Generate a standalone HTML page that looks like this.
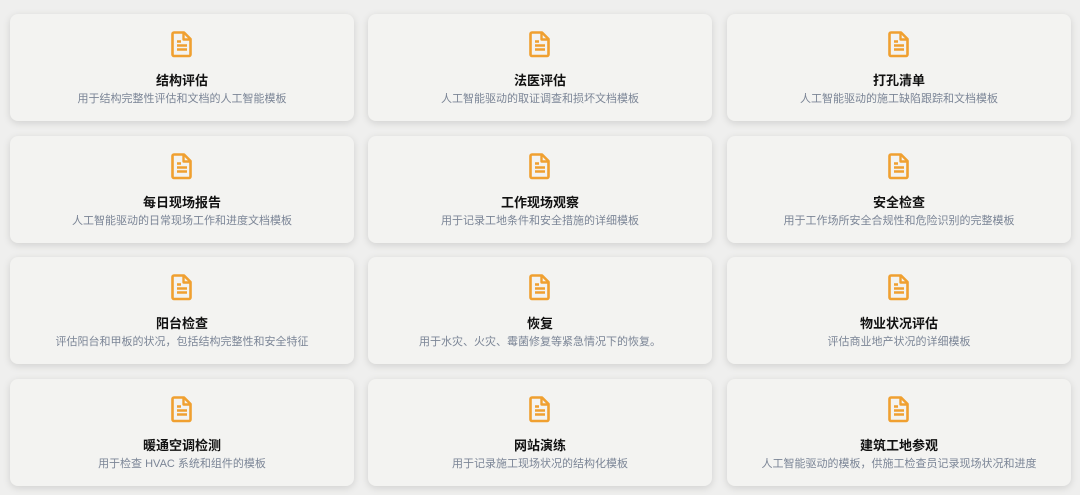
<!DOCTYPE html>
<html><head><meta charset="utf-8"><style>
html,body{margin:0;padding:0;background:#efefee;width:1080px;height:495px;overflow:hidden;font-family:"Liberation Sans","Noto Sans CJK SC",sans-serif}
.card{position:absolute;width:344px;height:107px;background:#f3f3f1;border-radius:8px;box-shadow:0 2px 8px rgba(0,0,0,0.13);text-align:center}
.card svg{position:absolute;left:160px;top:16px}
.t{position:absolute;left:0;right:0;top:56px;font-size:13px;font-weight:bold;color:#111}
.s{position:absolute;left:0;right:0;top:76px;font-size:11px;color:#7b8596}
</style></head><body>
<script>
const d=[["结构评估","用于结构完整性评估和文档的人工智能模板"],["法医评估","人工智能驱动的取证调查和损坏文档模板"],["打孔清单","人工智能驱动的施工缺陷跟踪和文档模板"],["每日现场报告","人工智能驱动的日常现场工作和进度文档模板"],["工作现场观察","用于记录工地条件和安全措施的详细模板"],["安全检查","用于工作场所安全合规性和危险识别的完整模板"],["阳台检查","评估阳台和甲板的状况，包括结构完整性和安全特征"],["恢复","用于水灾、火灾、霉菌修复等紧急情况下的恢复。"],["物业状况评估","评估商业地产状况的详细模板"],["暖通空调检测","用于检查 HVAC 系统和组件的模板"],["网站演练","用于记录施工现场状况的结构化模板"],["建筑工地参观","人工智能驱动的模板，供施工检查员记录现场状况和进度"]];
const xs=[10,368,727],ys=[14,136,257,379];
let h="";
d.forEach((c,i)=>{h+=`<div class="card" style="left:${xs[i%3]}px;top:${ys[Math.floor(i/3)]}px"><svg width="24" height="28" viewBox="0 0 24 28"><path d="M4 2.5h10l6.5 6.5v15.5a1.5 1.5 0 0 1-1.5 1.5H4a1.5 1.5 0 0 1-1.5-1.5V4A1.5 1.5 0 0 1 4 2.5z" fill="none" stroke="#f0a030" stroke-width="2.6" stroke-linejoin="round"/><path d="M13.5 3v6.5H20" fill="none" stroke="#f0a030" stroke-width="2.4" stroke-linejoin="round"/><path d="M7 11.5h4M7 15.5h10M7 19.5h10" stroke="#f0a030" stroke-width="2.4"/></svg><div class="t">${c[0]}</div><div class="s">${c[1]}</div></div>`});
document.write(h);
</script>
</body></html>
